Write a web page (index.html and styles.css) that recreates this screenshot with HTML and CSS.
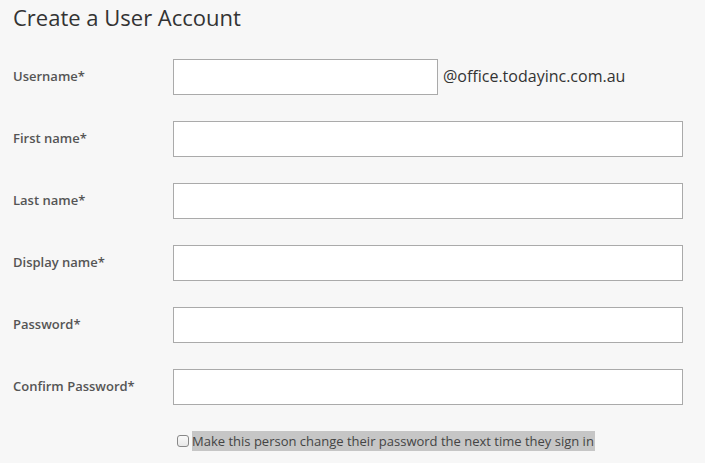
FILE: index.html
```html
<!DOCTYPE html>
<html>
<head>
<meta charset="utf-8">
<link rel="stylesheet" href="styles.css">
</head>
<body>
<div class="page">
  <h1 class="title">Create a User Account</h1>
  <form class="form">
    <div class="row">
      <label class="label">Username*</label>
      <div class="field">
        <input class="input input-short" type="text">
        <span class="domain">@office.todayinc.com.au</span>
      </div>
    </div>
    <div class="row">
      <label class="label">First name*</label>
      <div class="field"><input class="input" type="text"></div>
    </div>
    <div class="row">
      <label class="label">Last name*</label>
      <div class="field"><input class="input" type="text"></div>
    </div>
    <div class="row">
      <label class="label">Display name*</label>
      <div class="field"><input class="input" type="text"></div>
    </div>
    <div class="row">
      <label class="label">Password*</label>
      <div class="field"><input class="input" type="password"></div>
    </div>
    <div class="row">
      <label class="label">Confirm Password*</label>
      <div class="field"><input class="input" type="password"></div>
    </div>
    <div class="check-row">
      <span class="check"></span>
      <span class="check-text">Make this person change their password the next time they sign in</span>
    </div>
  </form>
</div>
</body>
</html>
```
FILE: styles.css
```css
html, body {
  margin: 0;
  padding: 0;
  background: #f7f7f7;
}
body {
  font-family: "Open Sans", "Liberation Sans", sans-serif;
  color: #333;
}
.page {
  padding: 3px 0 0 13px;
}
.title {
  margin: 0;
  font-size: 22px;
  font-weight: 400;
  line-height: 28px;
  color: #333;
}
.form {
  margin-top: 28px;
  display: flex;
  flex-direction: column;
  gap: 26px;
}
.row {
  display: flex;
  align-items: center;
  height: 36px;
}
.label {
  width: 160px;
  flex: none;
  font-size: 13px;
  font-weight: 600;
  color: #555;
  margin-top: -2px;
}
.field {
  display: flex;
  align-items: center;
}
.input {
  box-sizing: border-box;
  width: 510px;
  height: 36px;
  margin: 0;
  border: 1px solid #aaa;
  background: #fff;
  border-radius: 0;
  padding: 0 8px;
  outline: none;
}
.input-short {
  width: 265px;
}
.domain {
  margin-left: 5px;
  font-size: 16px;
  color: #333;
  margin-top: -2px;
}
.check-row {
  margin-top: 0;
  padding-left: 164px;
  display: flex;
  align-items: center;
}
.check {
  box-sizing: border-box;
  margin: 0 3px 0 0;
  width: 12px;
  height: 12px;
  border: 1px solid #888;
  border-radius: 3px;
  background: linear-gradient(#fafafa, #e8e8e8);
}
.check-text {
  font-size: 13px;
  line-height: 20px;
  background: #c6c6c6;
  color: #444;
  padding-right: 1px;
}
```
